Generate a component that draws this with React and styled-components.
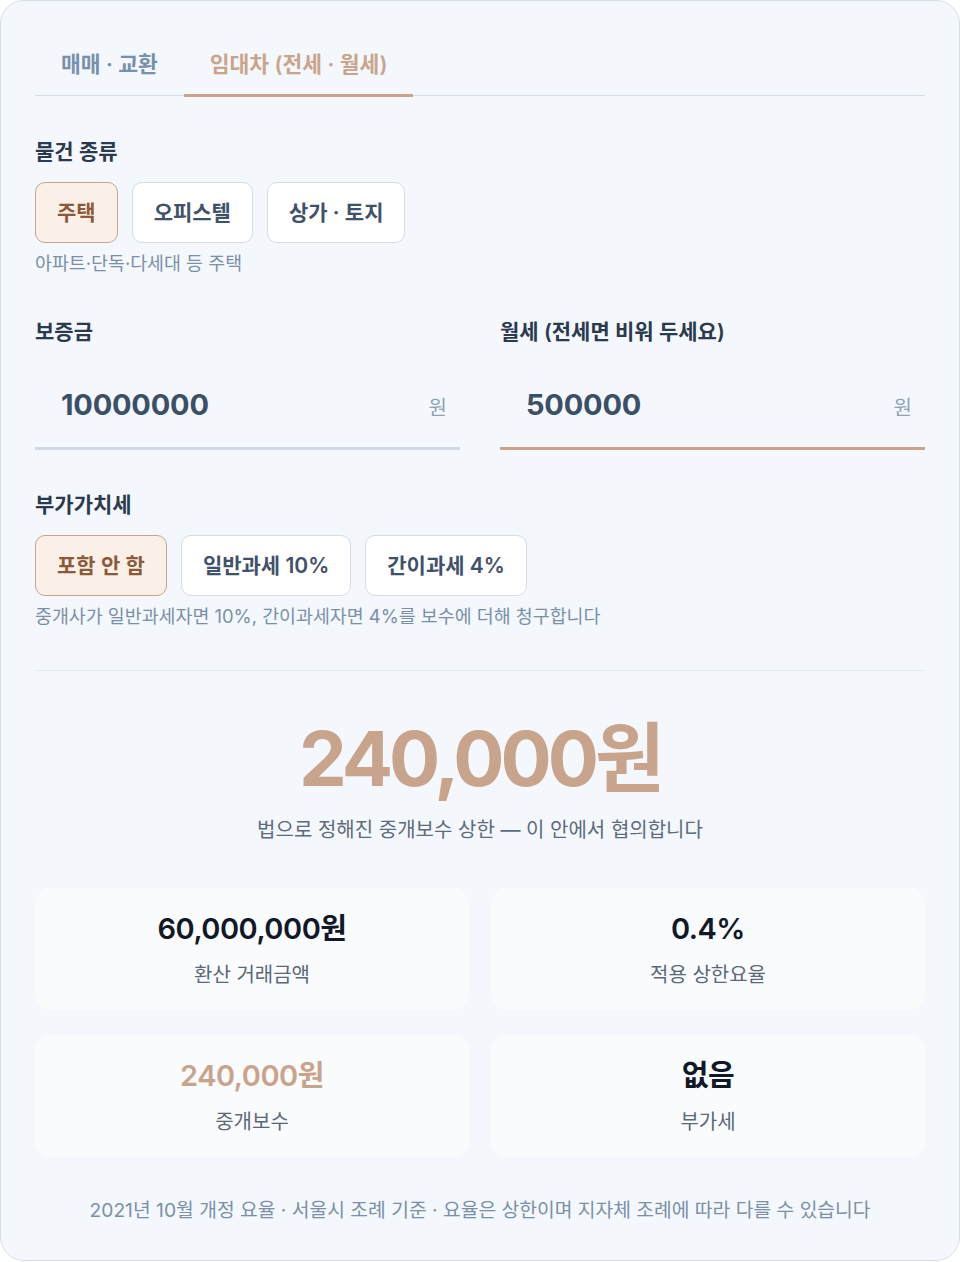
import React, { useState } from "react";
import styled, { createGlobalStyle } from "styled-components";

const Global = createGlobalStyle`
  html, body { margin: 0; padding: 0; background: #ffffff; }
  body { font-family: "Inter", "Noto Sans CJK KR", "Noto Sans", sans-serif; -webkit-font-smoothing: antialiased; }
  * { box-sizing: border-box; }
`;

const Card = styled.div`
  width: 960px;
  background: #f4f7fb;
  border: 1px solid #d6dee9;
  border-radius: 24px;
  padding: 33px 34px 38px;
  display: flex;
  flex-direction: column;
`;

const TabList = styled.div`
  display: flex;
  border-bottom: 1px solid #d6dee9;
`;

const Tab = styled.button`
  appearance: none;
  background: none;
  border: none;
  border-bottom: 3px solid ${(p) => (p.$active ? "#c9a48c" : "transparent")};
  margin-bottom: -2px;
  padding: 17px 26px;
  font-family: inherit;
  font-size: 21.5px;
  line-height: 26px;
  font-weight: 600;
  color: ${(p) => (p.$active ? "#c9a48c" : "#7890ab")};
  cursor: pointer;
`;

const Section = styled.div`
  display: flex;
  flex-direction: column;
  margin-top: ${(p) => p.$mt}px;
`;

const Label = styled.div`
  font-size: 21px;
  line-height: 26px;
  font-weight: 600;
  color: #2b3a4d;
`;

const ChipRow = styled.div`
  display: flex;
  gap: 14px;
  margin-top: 17px;
`;

const Chip = styled.button`
  appearance: none;
  height: 61px;
  padding: 0 21px;
  border-radius: 10px;
  border: 1.5px solid ${(p) => (p.$active ? "#c9a48c" : "#d3dce7")};
  background: ${(p) => (p.$active ? "#fbf0e7" : "#ffffff")};
  color: ${(p) => (p.$active ? "#8b5a3c" : "#3f5269")};
  font-family: inherit;
  font-size: 21px;
  font-weight: 600;
  line-height: 26px;
  cursor: pointer;
`;

const Hint = styled.div`
  margin-top: 8px;
  font-size: 18.4px;
  line-height: 24px;
  color: #7a90aa;
`;

const InputGrid = styled.div`
  display: grid;
  grid-template-columns: minmax(0, 1fr) minmax(0, 1fr);
  column-gap: 40px;
  margin-top: 44px;
`;

const Field = styled.div`
  display: flex;
  flex-direction: column;
  min-width: 0;
`;

const InputBox = styled.div`
  margin-top: 16px;
  height: 89px;
  display: flex;
  align-items: center;
  padding: 0 13px 0 26px;
  border-bottom: 3px solid ${(p) => (p.$focused ? "#c9a48c" : "#d0dae6")};
`;

const NumberInput = styled.input`
  flex: 1;
  width: 100%;
  min-width: 0;
  border: none;
  background: transparent;
  outline: none;
  font-family: inherit;
  font-size: 29px;
  font-weight: 700;
  color: #3b4f66;
  padding: 0;
  letter-spacing: -0.2px;
`;

const Unit = styled.span`
  font-size: 20px;
  color: #8ea2b9;
  margin-top: 4px;
`;

const Divider = styled.div`
  height: 1px;
  background: #e3e8ef;
  margin-top: 42px;
`;

const Result = styled.div`
  display: flex;
  flex-direction: column;
  align-items: center;
  margin-top: 44px;
`;

const BigNumber = styled.div`
  font-size: 76px;
  line-height: 86px;
  font-weight: 700;
  letter-spacing: -4px;
  color: #c9a48c;
`;

const Sub = styled.div`
  margin-top: 16px;
  font-size: 20px;
  line-height: 26px;
  color: #5c6b7d;
`;

const StatGrid = styled.div`
  display: grid;
  grid-template-columns: minmax(0, 1fr) minmax(0, 1fr);
  column-gap: 22px;
  row-gap: 25px;
  margin-top: 45px;
`;

const Stat = styled.div`
  background: #f9fbfd;
  border-radius: 16px;
  height: 122px;
  display: flex;
  flex-direction: column;
  align-items: center;
  padding-top: 23px;
`;

const StatValue = styled.div`
  font-size: 29px;
  line-height: 36px;
  font-weight: 600;
  letter-spacing: -0.5px;
  color: ${(p) => (p.$accent ? "#c9a48c" : "#111827")};
`;

const StatLabel = styled.div`
  margin-top: 16px;
  font-size: 20px;
  line-height: 24px;
  color: #5b6878;
`;

const Footer = styled.div`
  margin-top: 41px;
  text-align: center;
  font-size: 19.25px;
  line-height: 24px;
  color: #7a90aa;
`;

export default function App() {
  const [tab, setTab] = useState(1);
  const [kind, setKind] = useState(0);
  const [vat, setVat] = useState(0);
  const [deposit, setDeposit] = useState("10000000");
  const [rent, setRent] = useState("500000");

  return (
    <>
      <Global />
      <Card>
        <TabList>
          {["매매 · 교환", "임대차 (전세 · 월세)"].map((t, i) => (
            <Tab key={t} $active={tab === i} onClick={() => setTab(i)}>
              {t}
            </Tab>
          ))}
        </TabList>

        <Section $mt={43}>
          <Label>물건 종류</Label>
          <ChipRow>
            {["주택", "오피스텔", "상가 · 토지"].map((t, i) => (
              <Chip key={t} $active={kind === i} onClick={() => setKind(i)}>
                {t}
              </Chip>
            ))}
          </ChipRow>
          <Hint>아파트·단독·다세대 등 주택</Hint>
        </Section>

        <InputGrid>
          <Field>
            <Label>보증금</Label>
            <InputBox>
              <NumberInput value={deposit} onChange={(e) => setDeposit(e.target.value)} />
              <Unit>원</Unit>
            </InputBox>
          </Field>
          <Field>
            <Label>월세 (전세면 비워 두세요)</Label>
            <InputBox $focused>
              <NumberInput value={rent} onChange={(e) => setRent(e.target.value)} />
              <Unit>원</Unit>
            </InputBox>
          </Field>
        </InputGrid>

        <Section $mt={42}>
          <Label>부가가치세</Label>
          <ChipRow>
            {["포함 안 함", "일반과세 10%", "간이과세 4%"].map((t, i) => (
              <Chip key={t} $active={vat === i} onClick={() => setVat(i)}>
                {t}
              </Chip>
            ))}
          </ChipRow>
          <Hint>중개사가 일반과세자면 10%, 간이과세자면 4%를 보수에 더해 청구합니다</Hint>
        </Section>

        <Divider />

        <Result>
          <BigNumber>240,000원</BigNumber>
          <Sub>법으로 정해진 중개보수 상한 — 이 안에서 협의합니다</Sub>
        </Result>

        <StatGrid>
          <Stat>
            <StatValue>60,000,000원</StatValue>
            <StatLabel>환산 거래금액</StatLabel>
          </Stat>
          <Stat>
            <StatValue>0.4%</StatValue>
            <StatLabel>적용 상한요율</StatLabel>
          </Stat>
          <Stat>
            <StatValue $accent>240,000원</StatValue>
            <StatLabel>중개보수</StatLabel>
          </Stat>
          <Stat>
            <StatValue>없음</StatValue>
            <StatLabel>부가세</StatLabel>
          </Stat>
        </StatGrid>

        <Footer>
          2021년 10월 개정 요율 · 서울시 조례 기준 · 요율은 상한이며 지자체 조례에 따라 다를 수 있습니다
        </Footer>
      </Card>
    </>
  );
}
